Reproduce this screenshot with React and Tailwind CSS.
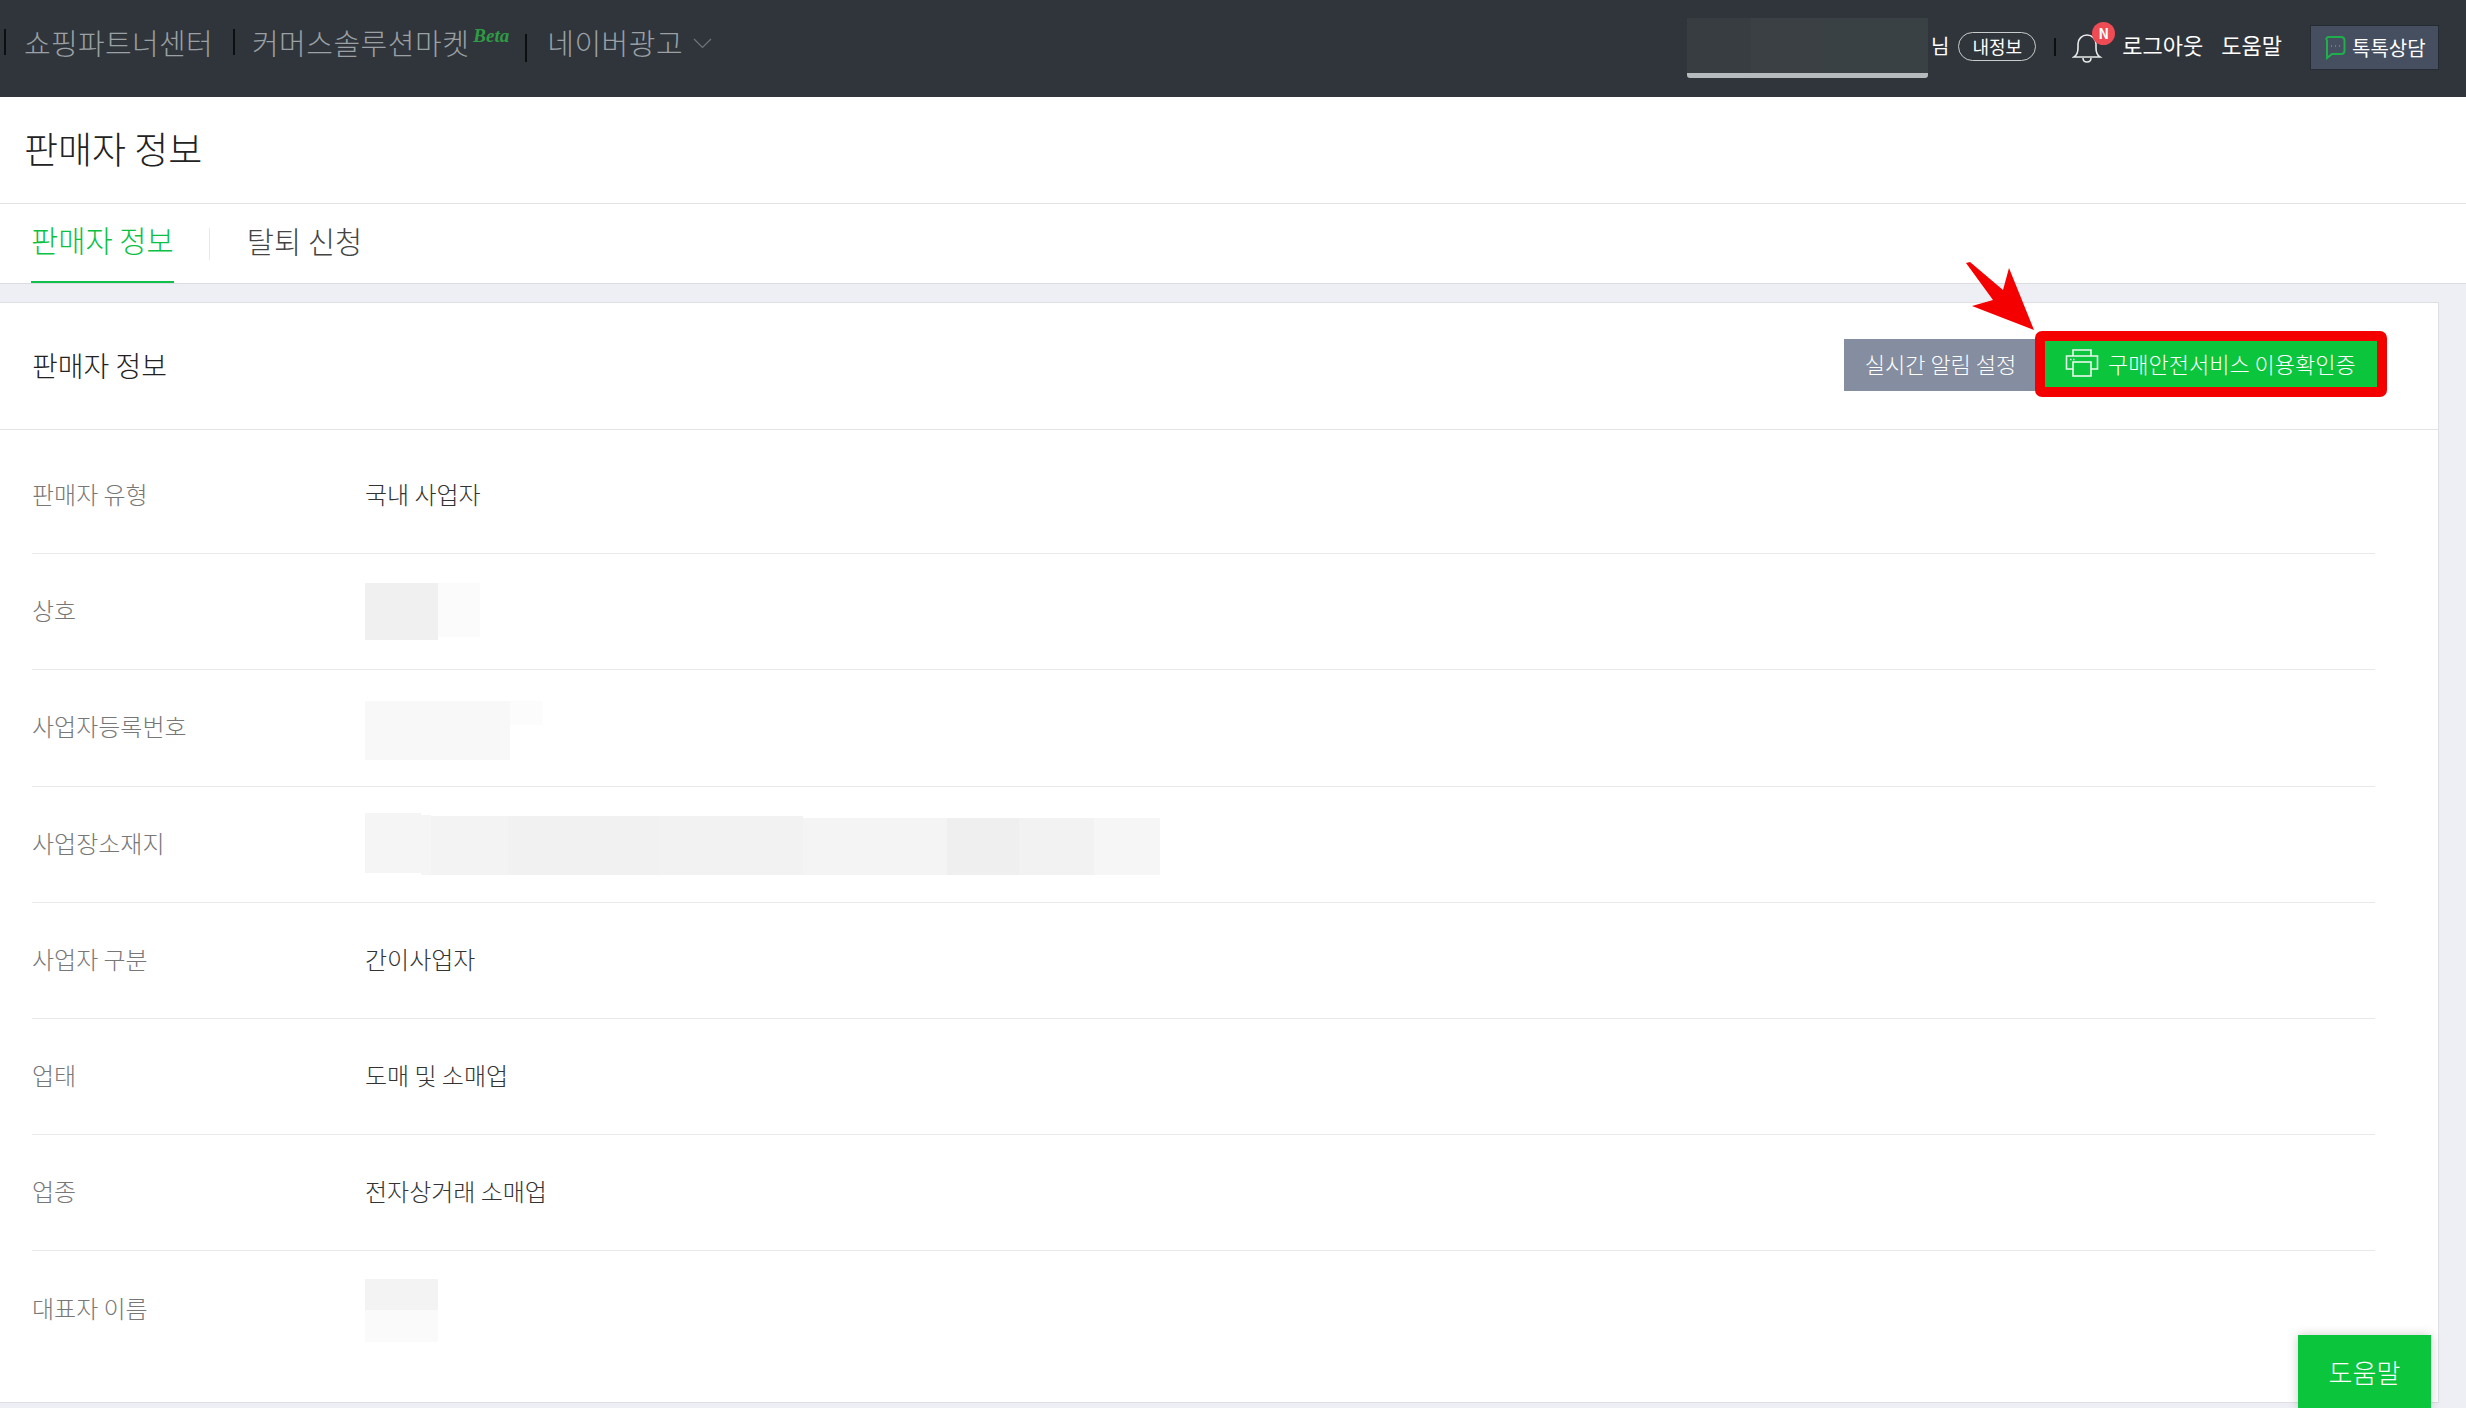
import React from "react";

const font = { fontFamily: '"Noto Sans CJK KR", "Noto Sans", sans-serif' };

function Tiles({ tiles, className = "" }) {
  return (
    <div className={`flex items-start ${className}`}>
      {tiles.map((t, i) => (
        <div key={i} className={t} />
      ))}
    </div>
  );
}

const rows = [
  { label: "판매자 유형", value: "국내 사업자" },
  {
    label: "상호",
    tiles: (
      <Tiles tiles={["w-[73px] h-[57px] bg-[#f0f0f0]", "w-[42px] h-[54px] bg-[#fafbfa]"]} />
    ),
  },
  {
    label: "사업자등록번호",
    tiles: (
      <div className="w-[178px] h-[60px] mt-[6px]">
        <Tiles tiles={["w-[145px] h-[59px] bg-[#f8f8f8]", "w-[33px] h-[24px] bg-[#fcfcfc]"]} />
      </div>
    ),
  },
  {
    label: "사업장소재지",
    tiles: (
      <Tiles
        tiles={[
          "w-[56px] h-[60px] bg-[#f5f5f5]",
          "w-[10px] h-[60px] mt-[2px] bg-[#f5f5f5]",
          "w-[78px] h-[59px] mt-[3px] bg-[#f3f3f3]",
          "w-[150px] h-[59px] mt-[3px] bg-[#f1f1f1]",
          "w-[144px] h-[59px] mt-[3px] bg-[#f2f2f2]",
          "w-[144px] h-[57px] mt-[5px] bg-[#f4f4f4]",
          "w-[72px] h-[57px] mt-[5px] bg-[#efefef]",
          "w-[75px] h-[57px] mt-[5px] bg-[#f2f2f2]",
          "w-[66px] h-[57px] mt-[5px] bg-[#f6f6f6]",
        ]}
      />
    ),
  },
  { label: "사업자 구분", value: "간이사업자" },
  { label: "업태", value: "도매 및 소매업" },
  { label: "업종", value: "전자상거래 소매업" },
  {
    label: "대표자 이름",
    tiles: (
      <div className="flex flex-col w-[73px] mt-[3px]">
        <div className="h-[31px] bg-[#f3f3f3]" />
        <div className="h-[32px] bg-[#fafafa]" />
      </div>
    ),
  },
];

function Sep({ className = "" }) {
  return <span className={`w-[2px] bg-[#0c0f12] shrink-0 ${className}`} />;
}

function Header() {
  return (
    <header className="h-[97px] bg-[#2f353b] flex items-start shrink-0">
      <Sep className="ml-[4px] mt-[29px] h-[26px]" />
      <span className="ml-[18px] mt-[21px] text-[29px] leading-[42px] text-[#9aa0a4] tracking-[0.3px] font-light">쇼핑파트너센터</span>
      <Sep className="ml-[20px] mt-[29px] h-[26px]" />
      <span className="ml-[17px] mt-[21px] text-[29px] leading-[42px] text-[#9aa0a4] tracking-[0.5px] font-light whitespace-nowrap">커머스솔루션마켓</span>
      <span className="ml-[4px] mt-[24px] text-[19px] leading-[24px] italic font-semibold text-[#2f9c45]" style={{ fontFamily: '"Liberation Serif", serif' }}>Beta</span>
      <Sep className="ml-[16px] mt-[34px] h-[28px]" />
      <span className="ml-[20px] mt-[21px] text-[29px] leading-[42px] text-[#9aa0a4] tracking-[0.5px] font-light whitespace-nowrap">네이버광고</span>
      <svg className="ml-[10px] mt-[38px]" width="19" height="11" viewBox="0 0 19 11" fill="none" stroke="#6f757a" strokeWidth="1.2">
        <path d="M1 1l8.500 8.500L18 1" />
      </svg>

      <div className="ml-auto flex items-start">
        <div className="w-[241px] h-[60px] mt-[18px]">
          <Tiles tiles={["w-[64px] h-[55px] bg-[#373d41]", "w-[73px] h-[55px] bg-[#3a4043]", "w-[104px] h-[55px] bg-[#3a4144]"]} />
          <div className="h-[5px] bg-[#b6bcbe] rounded-b-[3px]" />
        </div>
        <span className="ml-[3px] mt-[31px] text-[20px] leading-[30px] text-white">님</span>
        <span className="ml-[9px] mt-[32px] w-[78px] h-[29px] rounded-full border border-[#c9cccd] flex items-center justify-center text-[18px] text-white">내정보</span>
        <Sep className="ml-[18px] mt-[38px] h-[18px] w-[1px]" />
        <span className="relative ml-[16px] mt-[32px] w-[32px] h-[31px]">
          <svg width="32" height="31" viewBox="0 0 32 31" fill="none" stroke="#e8eaea" strokeWidth="1.6">
            <path d="M2 25c3-2 4-5 4-9V12c0-5 4-9 9-9s9 4 9 9v4c0 4 1 7 4 9z" />
            <path d="M11 26c0 3 2 4 4 4s4-1 4-4" />
          </svg>
          <span className="absolute -top-[10px] left-[20px] w-[23px] h-[23px] rounded-full bg-[#ef4b55] text-white text-[14px] font-bold flex items-center justify-center">N</span>
        </span>
        <span className="ml-[18px] mt-[28px] text-[22px] leading-[32px] text-white whitespace-nowrap">로그아웃</span>
        <span className="ml-[18px] mt-[28px] text-[22px] leading-[32px] text-white whitespace-nowrap">도움말</span>
        <span className="ml-[28px] mr-[27px] mt-[25px] w-[129px] h-[45px] bg-[#454f60] border border-[#262c33] flex items-center pl-[13px] gap-[6px]">
          <svg width="22" height="25" viewBox="0 0 22 25" fill="none" stroke="#1fb04b" strokeWidth="2">
            <path d="M5 2h12c2 0 3.500 1.500 3.500 3.500v10c0 2-1.500 3.500-3.500 3.500H8l-5 4V5.500C1.500 3.500 3 2 5 2z" />
            <path d="M7 11h.5M11 11h.5M15 11h.5" stroke="#7fb98f" />
          </svg>
          <span className="text-[20px] text-white whitespace-nowrap">톡톡상담</span>
        </span>
      </div>
    </header>
  );
}

function PrinterIcon() {
  return (
    <svg width="34" height="28" viewBox="0 0 34 28" fill="none" stroke="#e9f9ee" strokeWidth="1.6">
      <path d="M8 20H1.500V7h31v13H26" />
      <path d="M8 7V1h18v6" />
      <rect x="8" y="13" width="18" height="14" />
      <path d="M5 10.500h1.500M8 10.500h1.500" />
    </svg>
  );
}

export default function App() {
  return (
    <div className="h-[1408px] w-full overflow-hidden bg-[#eeeff5] flex flex-col relative" style={font}>
      <Header />

      <div className="h-[107px] bg-white border-b border-[#e2e3e6] flex items-center pl-[24px] pb-[3px] shrink-0">
        <h1 className="text-[37px] text-[#222] font-light">판매자 정보</h1>
      </div>

      <nav className="h-[80px] bg-white border-b border-[#dcdde0] flex items-stretch shrink-0">
        <div className="ml-[31px] border-b-2 border-[#0fc14b] flex items-center pb-[5px] text-[29.6px] text-[#0cc142] font-light">판매자 정보</div>
        <div className="flex items-center ml-[35px]">
          <span className="h-[32px] w-px bg-[#e8e8ea]" />
        </div>
        <div className="ml-[37px] flex items-center pb-[5px] text-[29.6px] text-[#444] font-light">탈퇴 신청</div>
      </nav>

      <main className="pt-[18px] pr-[27px] shrink-0">
        <section className="h-[1101px] bg-white border-t border-r border-b border-[#dfe0e4]">
          <div className="h-[127px] border-b border-[#e4e5e7] flex items-center pl-[32px] pr-[61px]">
            <h2 className="text-[28px] text-[#222] font-light pb-[3px]">판매자 정보</h2>
            <div className="ml-auto flex items-center -mt-[2px]">
              <button className="w-[200px] h-[52px] bg-[#858da0] text-white text-[22px] font-light pr-[7px] pb-[4px]">실시간 알림 설정</button>
              <button className="relative w-[333px] h-[52px] bg-[#0bc53c] text-white text-[22px] font-light flex items-center pl-[21px] gap-[9px] pb-[4px] whitespace-nowrap">
                <PrinterIcon />
                구매안전서비스 이용확인증
                <span className="absolute -top-[8px] -bottom-[6px] -left-[9px] -right-[10px] border-[10px] border-[#f50000] rounded-[7px]" />
                <svg className="absolute -left-[80px] -top-[78px]" width="72" height="72" viewBox="0 0 72 72" fill="#f50000">
                  <path d="M2 2L6 1L39 29L45 7L70 69L8 45L29 39Z" />
                </svg>
              </button>
            </div>
          </div>

          <div className="pt-[8px] pl-[32px] pr-[63px]">
            {rows.map((r, i) => (
              <div key={r.label} className={`h-[116.2px] flex items-center ${i < rows.length - 1 ? "border-b border-[#e8e9eb]" : ""}`}>
                <div className="w-[333px] text-[24px] text-[#777] font-light pb-[3px]">{r.label}</div>
                {r.value ? <div className="text-[24px] text-[#333] font-light pb-[3px]">{r.value}</div> : r.tiles}
              </div>
            ))}
          </div>
        </section>
      </main>

      <button className="absolute left-[2298px] top-[1335px] w-[133px] h-[73px] bg-[#0bc53c] text-white text-[26px] font-light shadow-[0_0_10px_rgba(0,0,0,0.2)]">도움말</button>
    </div>
  );
}
